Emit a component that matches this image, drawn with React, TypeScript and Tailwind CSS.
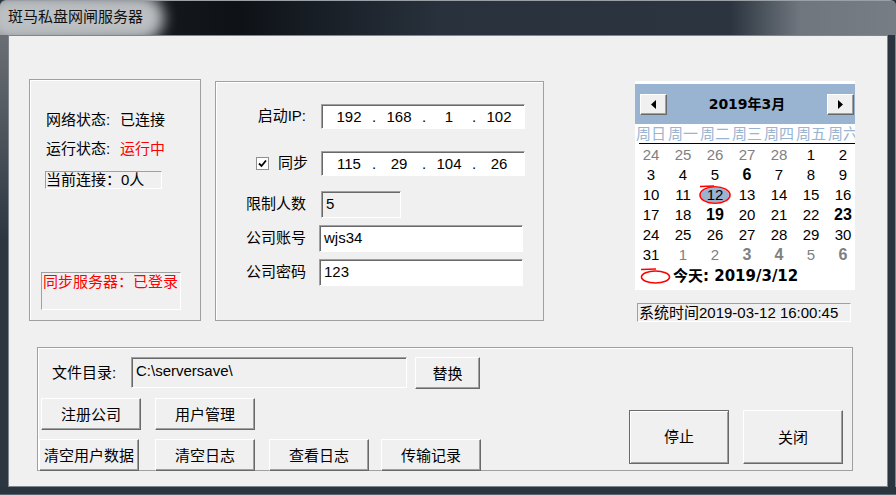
import React from "react";

const FONT = "font-['Liberation_Sans','Noto_Sans_CJK_SC',sans-serif]";

function Btn({ children, className = "" }: { children: React.ReactNode; className?: string }) {
  return (
    <div
      className={
        "flex items-center justify-center bg-[#f0f0f0] border border-t-white border-l-white border-r-[#696969] border-b-[#696969] shadow-[inset_-1px_-1px_0_#a0a0a0] text-[15px] leading-none text-black " +
        className
      }
    >
      {children}
    </div>
  );
}

const SUNKEN =
  "border border-t-[#a0a0a0] border-l-[#a0a0a0] border-r-white border-b-white shadow-[inset_1px_1px_0_#696969]";
const STATIC = "border border-t-[#a0a0a0] border-l-[#a0a0a0] border-r-white border-b-white";

function IpBox({ parts }: { parts: string[] }) {
  return (
    <div className={"w-[204px] h-[25px] bg-white flex items-center pl-[6px] text-[15px] leading-[20px] " + SUNKEN}>
      {parts.map((p, i) => (
        <React.Fragment key={i}>
          {i > 0 && <span className="w-[8px] text-center">.</span>}
          <span className="w-[42px] text-center">{p}</span>
        </React.Fragment>
      ))}
    </div>
  );
}

type Cell = { d: number; g?: boolean; b?: boolean; sel?: boolean };

const rows: Cell[][] = [
  [{ d: 24, g: true }, { d: 25, g: true }, { d: 26, g: true }, { d: 27, g: true }, { d: 28, g: true }, { d: 1 }, { d: 2 }],
  [{ d: 3 }, { d: 4 }, { d: 5 }, { d: 6, b: true }, { d: 7 }, { d: 8 }, { d: 9 }],
  [{ d: 10 }, { d: 11 }, { d: 12, sel: true }, { d: 13 }, { d: 14 }, { d: 15 }, { d: 16 }],
  [{ d: 17 }, { d: 18 }, { d: 19, b: true }, { d: 20 }, { d: 21 }, { d: 22 }, { d: 23, b: true }],
  [{ d: 24 }, { d: 25 }, { d: 26 }, { d: 27 }, { d: 28 }, { d: 29 }, { d: 30 }],
  [{ d: 31 }, { d: 1, g: true }, { d: 2, g: true }, { d: 3, g: true, b: true }, { d: 4, g: true, b: true }, { d: 5, g: true }, { d: 6, g: true, b: true }],
];

function ArrowBtn({ dir }: { dir: "l" | "r" }) {
  return (
    <div className="w-[27px] h-[21px] flex items-center justify-center bg-[#f0f0f0] border border-t-white border-l-white border-r-[#696969] border-b-[#696969] shadow-[inset_-1px_-1px_0_#a0a0a0]">
      <svg width="5" height="9" viewBox="0 0 5 9">
        {dir === "l" ? <polygon points="5,0 5,9 0,4.5" fill="#000" /> : <polygon points="0,0 0,9 5,4.5" fill="#000" />}
      </svg>
    </div>
  );
}

export default function App() {
  return (
    <div className={"w-[896px] h-[495px] flex flex-col bg-[#2b3540] overflow-hidden text-black " + FONT}>
      {/* title bar */}
      <div className="relative h-[35px] shrink-0 overflow-hidden rounded-t-[6px] border-t border-[#9aa0a6] bg-[linear-gradient(90deg,#5f656b_0px,#14181d_165px,#0e1217_240px,#28313c_440px,#2b343f_730px,#6f767e_800px,#767d85_100%)]">
        <div className="absolute left-[-14px] top-[-6px] w-[178px] h-[46px] rounded-full bg-[#bcc0c3] blur-[7px]" />
        <div className="relative pl-[8px] pt-[6px] text-[15px] leading-[20px] text-[#111]">斑马私盘网闸服务器</div>
      </div>

      <div className="flex flex-1">
        <div className="w-[8px] bg-[linear-gradient(180deg,#6a6f74,#2d3742_45%)]" />
        {/* client */}
        <div className="w-[880px] h-[452px] bg-[#f0f0f0] border border-[#80868c] flex flex-col text-[15px]">
          <div className="h-[311px] flex items-start pl-[20px] pt-[43px]">
            {/* panel 1 */}
            <div className="w-[172px] h-[242px] border border-[#a0a0a0] shadow-[inset_1px_1px_0_#fff] flex flex-col pt-[30px]">
              <div className="ml-[16px] flex leading-[20px]">
                <span className="w-[74px]">网络状态:</span>
                <span>已连接</span>
              </div>
              <div className="ml-[16px] mt-[9px] flex leading-[20px]">
                <span className="w-[74px]">运行状态:</span>
                <span className="text-[#ff0000]">运行中</span>
              </div>
              <div className={"mt-[12px] ml-[15px] w-[117px] h-[18px] leading-[16px] whitespace-nowrap overflow-hidden " + STATIC}>
                当前连接：0人
              </div>
              <div className={"mt-[83px] ml-[11px] w-[140px] h-[38px] leading-[18px] pl-[1px] text-[#ff0000] whitespace-nowrap " + STATIC}>
                同步服务器：已登录
              </div>
            </div>

            {/* panel 2 */}
            <div className="ml-[14px] mt-[2px] w-[329px] h-[240px] border border-[#a0a0a0] shadow-[inset_1px_1px_0_#fff] flex flex-col">
              <div className="mt-[22px] flex items-center h-[25px]">
                <span className="w-[90px] text-right">启动IP:</span>
                <div className="ml-[15px]">
                  <IpBox parts={["192", "168", "1", "102"]} />
                </div>
              </div>
              <div className="mt-[22px] flex items-center h-[25px]">
                <div className="w-[92px] flex items-center justify-end">
                  <div className="w-[13px] h-[13px] bg-white border border-[#8e8f8f] flex items-center justify-center mr-[9px]">
                    <svg width="9" height="9" viewBox="0 0 9 9">
                      <path d="M1 4.5 L3.5 7 L8 1.5" stroke="#000" strokeWidth="1.8" fill="none" />
                    </svg>
                  </div>
                  <span>同步</span>
                </div>
                <div className="ml-[13px]">
                  <IpBox parts={["115", "29", "104", "26"]} />
                </div>
              </div>
              <div className="mt-[15px] flex items-center h-[27px]">
                <span className="w-[90px] text-right">限制人数</span>
                <div className={"ml-[15px] w-[80px] h-[27px] bg-[#f0f0f0] pl-[4px] leading-[24px] " + SUNKEN}>5</div>
              </div>
              <div className="mt-[7px] flex items-center h-[27px]">
                <span className="w-[90px] text-right">公司账号</span>
                <div className={"ml-[13px] w-[204px] h-[27px] bg-white pl-[4px] leading-[24px] " + SUNKEN}>wjs34</div>
              </div>
              <div className="mt-[7px] flex items-center h-[27px]">
                <span className="w-[90px] text-right">公司密码</span>
                <div className={"ml-[13px] w-[204px] h-[27px] bg-white pl-[4px] leading-[24px] " + SUNKEN}>123</div>
              </div>
            </div>

            {/* calendar column */}
            <div className="ml-[91px] mt-[2px] flex flex-col">
              <div className="w-[220px] h-[209px] bg-white overflow-hidden flex flex-col pt-[3px]">
                <div className="h-[40px] bg-[#99b4d1] flex items-center">
                  <div className="ml-[5px]">
                    <ArrowBtn dir="l" />
                  </div>
                  <div className="flex-1 text-center font-['DejaVu_Sans','Noto_Sans_CJK_SC',sans-serif] font-bold text-[14px] leading-[20px]">
                    2019年3月
                  </div>
                  <div className="mr-[1px]">
                    <ArrowBtn dir="r" />
                  </div>
                </div>
                <div className="h-[19px] grid grid-cols-[repeat(7,32px)] text-[15px] leading-[19px] text-[#99b4d1] whitespace-nowrap">
                  {["周日", "周一", "周二", "周三", "周四", "周五", "周六"].map((d) => (
                    <div key={d} className="text-center">
                      {d}
                    </div>
                  ))}
                </div>
                <div className="ml-[4px] h-px bg-black shrink-0" />
                <div className="mt-[1px] grid grid-cols-[repeat(7,32px)] grid-rows-[repeat(6,20px)] text-[15px] leading-[20px]">
                  {rows.flat().map((c, i) => (
                    <div
                      key={i}
                      className={
                        "relative text-center " +
                        (c.g ? "text-[#808080] " : "text-black ") +
                        (c.b ? "font-bold text-[16px] " : "")
                      }
                    >
                      {c.sel && (
                        <svg className="absolute left-0 top-0" width="32" height="20" viewBox="0 0 32 20">
                          <ellipse cx="16" cy="10" rx="14" ry="7.5" fill="#99b4d1" />
                          <path d="M1 1.5 L15 1" stroke="#ff0000" strokeWidth="1.6" fill="none" />
                          <ellipse cx="16" cy="10" rx="15" ry="8.3" stroke="#ff0000" strokeWidth="1.6" fill="none" />
                        </svg>
                      )}
                      <span className="relative">{c.d}</span>
                    </div>
                  ))}
                </div>
                <div className="mt-[1px] h-[20px] flex items-center">
                  <svg className="ml-[5px]" width="31" height="16" viewBox="0 0 31 16">
                    <path d="M1 1.5 L16 1" stroke="#ff0000" strokeWidth="1.6" fill="none" />
                    <ellipse cx="15.5" cy="9" rx="14" ry="6" stroke="#ff0000" strokeWidth="1.6" fill="none" />
                  </svg>
                  <span className="ml-[2px] font-['DejaVu_Sans','Noto_Sans_CJK_SC',sans-serif] font-bold text-[15px] leading-[20px] whitespace-nowrap">
                    今天: 2019/3/12
                  </span>
                </div>
              </div>
              <div className={"mt-[13px] ml-[2px] w-[214px] h-[19px] leading-[17px] pl-[1px] whitespace-nowrap overflow-hidden " + STATIC}>
                系统时间2019-03-12 16:00:45
              </div>
            </div>
          </div>

          {/* bottom group */}
          <div className="ml-[28px] w-[816px] h-[124px] border border-[#a0a0a0] shadow-[inset_1px_1px_0_#fff] flex">
            <div className="w-[443px] flex flex-col">
              <div className="mt-[9px] flex items-start h-[32px]">
                <span className="ml-[14px] w-[79px] leading-[31px]">文件目录:</span>
                <div className={"w-[276px] h-[31px] bg-[#f0f0f0] pl-[4px] pt-[4px] leading-[18px] " + SUNKEN}>C:\serversave\</div>
                <Btn className="ml-[8px] w-[65px] h-[32px]">替换</Btn>
              </div>
              <div className="mt-[9px] flex">
                <Btn className="ml-[3px] w-[100px] h-[32px]">注册公司</Btn>
                <Btn className="ml-[14px] w-[100px] h-[32px]">用户管理</Btn>
              </div>
              <div className="mt-[9px] flex">
                <Btn className="ml-[1px] w-[100px] h-[32px]">清空用户数据</Btn>
                <Btn className="ml-[16px] w-[100px] h-[32px]">清空日志</Btn>
                <Btn className="ml-[14px] w-[100px] h-[32px]">查看日志</Btn>
                <Btn className="ml-[12px] w-[100px] h-[32px]">传输记录</Btn>
              </div>
            </div>
            <div className="ml-[148px] pt-[62px] flex items-start">
              <div className="w-[100px] h-[54px] flex items-center justify-center bg-[#f0f0f0] border border-[#696969] shadow-[inset_1px_1px_0_#fff,inset_-1px_-1px_0_#a0a0a0] text-[15px]">
                停止
              </div>
              <Btn className="ml-[14px] w-[100px] h-[54px]">关闭</Btn>
            </div>
          </div>
        </div>
        <div className="w-[8px] border-r border-[#7c848c]" />
      </div>
      <div className="h-[8px] shrink-0 border-b border-[#5a646e]" />
    </div>
  );
}
